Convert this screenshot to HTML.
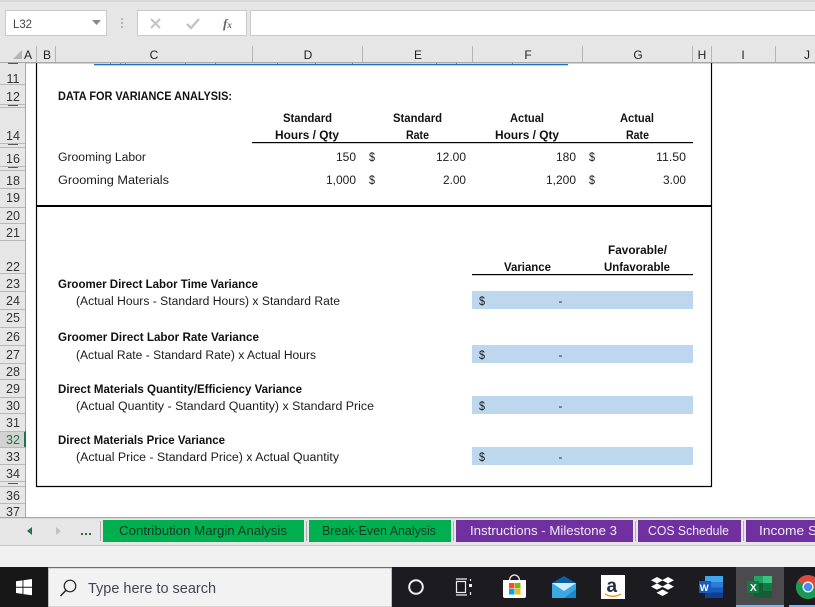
<!DOCTYPE html>
<html><head><meta charset="utf-8"><style>
html,body{margin:0;padding:0;width:815px;height:607px;overflow:hidden;background:#fff}
svg{display:block}
text{font-family:"Liberation Sans",sans-serif;font-size:11.5px;fill:#1c1c1c}
.b{font-weight:bold;fill:#111}
.h{font-size:12px;fill:#222;text-anchor:middle}
.r{font-size:12.5px;fill:#333;text-anchor:middle}
.t{font-size:12.5px}
</style></head><body>
<svg width="815" height="607" viewBox="0 0 815 607" xmlns="http://www.w3.org/2000/svg">
<rect width="815" height="607" fill="#fff"/>
<!-- ribbon / formula bar -->
<rect width="815" height="63" fill="#e6e6e6"/>
<rect x="0" y="0" width="815" height="2" fill="#d8d8d8"/>
<rect x="5.500" y="10.500" width="101" height="25" fill="#fff" stroke="#c9c9c9"/>
<text x="13" y="28" style="font-size:12px;fill:#444" textLength="19" lengthAdjust="spacingAndGlyphs">L32</text>
<path d="M92 20h9l-4.500 5z" fill="#888"/>
<g fill="#b5b5b5"><rect x="121" y="18" width="2" height="2"/><rect x="121" y="22" width="2" height="2"/><rect x="121" y="26" width="2" height="2"/></g>
<rect x="137.500" y="10.500" width="109" height="25" fill="#fff" stroke="#c9c9c9"/>
<path d="M151 19l9 9M160 19l-9 9" stroke="#c4c4c4" stroke-width="2" fill="none"/>
<path d="M187 24l4 4 8-9" stroke="#c4c4c4" stroke-width="2.400" fill="none"/>
<text x="223" y="28" style="font-family:'Liberation Serif',serif;font-style:italic;font-weight:bold;font-size:13px;fill:#666">f<tspan font-size="9">x</tspan></text>
<rect x="250.500" y="10.500" width="570" height="25" fill="#fff" stroke="#c9c9c9"/>
<!-- column header -->
<path d="M22 50v9h-9z" fill="#b5b5b5"/>
<rect x="0" y="62" width="815" height="1.500" fill="#a8a8a8"/>
<g fill="#b5b5b5">
<rect x="36" y="46" width="1" height="16"/><rect x="55" y="46" width="1" height="16"/><rect x="252" y="46" width="1" height="16"/>
<rect x="362" y="46" width="1" height="16"/><rect x="472" y="46" width="1" height="16"/><rect x="582" y="46" width="1" height="16"/>
<rect x="692" y="46" width="1" height="16"/><rect x="711" y="46" width="1" height="16"/><rect x="775" y="46" width="1" height="16"/>
</g>
<g>
<text class="h" x="28" y="59">A</text><text class="h" x="47" y="59">B</text><text class="h" x="154" y="59">C</text>
<text class="h" x="308" y="59">D</text><text class="h" x="418" y="59">E</text><text class="h" x="528" y="59">F</text>
<text class="h" x="638" y="59">G</text><text class="h" x="702" y="59">H</text><text class="h" x="743" y="59">I</text><text class="h" x="807" y="59">J</text>
</g>
<!-- row header -->
<rect x="0" y="63" width="25" height="454" fill="#e6e6e6"/>
<rect x="25" y="63" width="1" height="454" fill="#a8a8a8"/>
<rect x="0" y="431" width="25" height="16" fill="#d2d2d2"/>
<rect x="24" y="431" width="2" height="16" fill="#217346"/>
<path d="M0 84h25M0 104h25M0 107h25M0 143h25M0 147h25M0 166h25M0 170h25M0 188h25M0 207h25M0 223h25M0 240h25M0 273h25M0 291h25M0 309h25M0 327h25M0 345h25M0 363h25M0 379h25M0 397h25M0 413h25M0 431h25M0 447h25M0 464h25M0 481h25M0 486h25M0 503h25" stroke="#b8b8b8" stroke-width="1" transform="translate(0,.5)"/>
<g fill="#555"><rect x="8" y="105" width="10" height="1"/><rect x="8" y="144" width="10" height="1"/><rect x="8" y="167" width="10" height="1"/><rect x="8" y="483" width="10" height="1"/><rect x="8" y="63" width="10" height="1"/></g>
<g>
<text class="r" x="13" y="83">11</text><text class="r" x="13" y="101">12</text><text class="r" x="13" y="140">14</text>
<text class="r" x="13" y="163">16</text><text class="r" x="13" y="185">18</text><text class="r" x="13" y="202">19</text>
<text class="r" x="13" y="220">20</text><text class="r" x="13" y="237">21</text><text class="r" x="13" y="271">22</text>
<text class="r" x="13" y="288">23</text><text class="r" x="13" y="305">24</text><text class="r" x="13" y="322">25</text>
<text class="r" x="13" y="341">26</text><text class="r" x="13" y="359">27</text><text class="r" x="13" y="376">28</text>
<text class="r" x="13" y="393">29</text><text class="r" x="13" y="410">30</text><text class="r" x="13" y="427">31</text>
<text class="r" x="13" y="444" style="fill:#217346">32</text><text class="r" x="13" y="461">33</text><text class="r" x="13" y="478">34</text>
<text class="r" x="13" y="500">36</text><text class="r" x="13" y="516">37</text>
</g>
<!-- blue clipped line -->
<rect x="94" y="64" width="474" height="1.300" fill="#1f6fc0"/>
<g fill="#3c8fd8"><rect x="110" y="63" width="1" height="1"/><rect x="120" y="63" width="1" height="1"/><rect x="125" y="63" width="1" height="1"/><rect x="185" y="63" width="1" height="1"/><rect x="215" y="63" width="1" height="1"/><rect x="277" y="63" width="1" height="1"/><rect x="315" y="63" width="1" height="1"/><rect x="352" y="63" width="1" height="1"/><rect x="436" y="63" width="1" height="1"/><rect x="456" y="63" width="1" height="1"/><rect x="512" y="63" width="1" height="1"/></g>
<!-- sheet box -->
<path d="M36.500 63V486.500H711.500V63" fill="none" stroke="#000" stroke-width="1.200"/>
<rect x="37" y="205" width="674" height="2" fill="#000"/>
<!-- data -->
<text class="b" x="58" y="100" textLength="174" lengthAdjust="spacingAndGlyphs">DATA FOR VARIANCE ANALYSIS:</text>
<text class="b" x="283" y="122" textLength="49" lengthAdjust="spacingAndGlyphs">Standard</text>
<text class="b" x="393" y="122" textLength="49" lengthAdjust="spacingAndGlyphs">Standard</text>
<text class="b" x="510" y="122" textLength="34" lengthAdjust="spacingAndGlyphs">Actual</text>
<text class="b" x="620" y="122" textLength="34" lengthAdjust="spacingAndGlyphs">Actual</text>
<text class="b" x="275" y="139" textLength="64" lengthAdjust="spacingAndGlyphs">Hours / Qty</text>
<text class="b" x="406" y="139" textLength="23" lengthAdjust="spacingAndGlyphs">Rate</text>
<text class="b" x="495" y="139" textLength="64" lengthAdjust="spacingAndGlyphs">Hours / Qty</text>
<text class="b" x="626" y="139" textLength="23" lengthAdjust="spacingAndGlyphs">Rate</text>
<rect x="252" y="142" width="441" height="1.200" fill="#000"/>
<text x="58" y="161" textLength="88" lengthAdjust="spacingAndGlyphs">Grooming Labor</text>
<text x="58" y="184" textLength="111" lengthAdjust="spacingAndGlyphs">Grooming Materials</text>
<text x="336" y="161" textLength="20" lengthAdjust="spacingAndGlyphs">150</text>
<text x="369" y="161" textLength="6" lengthAdjust="spacingAndGlyphs">$</text>
<text x="436" y="161" textLength="30" lengthAdjust="spacingAndGlyphs">12.00</text>
<text x="556" y="161" textLength="20" lengthAdjust="spacingAndGlyphs">180</text>
<text x="589" y="161" textLength="6" lengthAdjust="spacingAndGlyphs">$</text>
<text x="656" y="161" textLength="30" lengthAdjust="spacingAndGlyphs">11.50</text>
<text x="326" y="184" textLength="30" lengthAdjust="spacingAndGlyphs">1,000</text>
<text x="369" y="184" textLength="6" lengthAdjust="spacingAndGlyphs">$</text>
<text x="443" y="184" textLength="23" lengthAdjust="spacingAndGlyphs">2.00</text>
<text x="546" y="184" textLength="30" lengthAdjust="spacingAndGlyphs">1,200</text>
<text x="589" y="184" textLength="6" lengthAdjust="spacingAndGlyphs">$</text>
<text x="663" y="184" textLength="23" lengthAdjust="spacingAndGlyphs">3.00</text>
<!-- variance -->
<text class="b" x="608" y="254" textLength="59" lengthAdjust="spacingAndGlyphs">Favorable/</text>
<text class="b" x="504" y="271" textLength="47" lengthAdjust="spacingAndGlyphs">Variance</text>
<text class="b" x="604" y="271" textLength="66" lengthAdjust="spacingAndGlyphs">Unfavorable</text>
<rect x="472" y="274" width="221" height="1.200" fill="#000"/>
<g fill="#bdd7ee"><rect x="472" y="291" width="221" height="18"/><rect x="472" y="345" width="221" height="18"/><rect x="472" y="396" width="221" height="18"/><rect x="472" y="447" width="221" height="18"/></g>
<g>
<text x="479" y="305" textLength="6" lengthAdjust="spacingAndGlyphs">$</text><text x="558.500" y="305">-</text>
<text x="479" y="359" textLength="6" lengthAdjust="spacingAndGlyphs">$</text><text x="558.500" y="359">-</text>
<text x="479" y="410" textLength="6" lengthAdjust="spacingAndGlyphs">$</text><text x="558.500" y="410">-</text>
<text x="479" y="461" textLength="6" lengthAdjust="spacingAndGlyphs">$</text><text x="558.500" y="461">-</text>
</g>
<text class="b" x="58" y="288" textLength="200" lengthAdjust="spacingAndGlyphs">Groomer Direct Labor Time Variance</text>
<text x="76" y="305" textLength="264" lengthAdjust="spacingAndGlyphs">(Actual Hours - Standard Hours) x Standard Rate</text>
<text class="b" x="58" y="341" textLength="201" lengthAdjust="spacingAndGlyphs">Groomer Direct Labor Rate Variance</text>
<text x="76" y="359" textLength="240" lengthAdjust="spacingAndGlyphs">(Actual Rate - Standard Rate) x Actual Hours</text>
<text class="b" x="58" y="393" textLength="244" lengthAdjust="spacingAndGlyphs">Direct Materials Quantity/Efficiency Variance</text>
<text x="76" y="410" textLength="298" lengthAdjust="spacingAndGlyphs">(Actual Quantity - Standard Quantity) x Standard Price</text>
<text class="b" x="58" y="444" textLength="167" lengthAdjust="spacingAndGlyphs">Direct Materials Price Variance</text>
<text x="76" y="461" textLength="263" lengthAdjust="spacingAndGlyphs">(Actual Price - Standard Price) x Actual Quantity</text>
<!-- tabs -->
<rect x="0" y="517" width="815" height="29" fill="#e6e6e6"/>
<rect x="0" y="517" width="815" height="1.200" fill="#a8a8a8"/>
<rect x="0" y="545" width="815" height="1" fill="#c6c6c6"/>
<rect x="0" y="546" width="815" height="21" fill="#f0f0f0"/>
<path d="M32 527v8l-5-4z" fill="#217346"/>
<path d="M56 527v8l5-4z" fill="#c2c2c2"/>
<g fill="#217346"><rect x="81" y="533" width="2" height="2"/><rect x="85" y="533" width="2" height="2"/><rect x="89" y="533" width="2" height="2"/></g>
<g fill="#b0b0b0"><rect x="100" y="521" width="1" height="20"/><rect x="306" y="521" width="1" height="20"/><rect x="453" y="521" width="1" height="20"/><rect x="635" y="521" width="1" height="20"/><rect x="743" y="521" width="1" height="20"/></g>
<rect x="103" y="520" width="201" height="22" fill="#00b050"/>
<rect x="309" y="520" width="142" height="22" fill="#00b050"/>
<rect x="456" y="520" width="177" height="22" fill="#7030a0"/>
<rect x="638" y="520" width="103" height="22" fill="#7030a0"/>
<rect x="746" y="520" width="69" height="22" fill="#7030a0"/>
<text class="t" x="119" y="535" textLength="168" lengthAdjust="spacingAndGlyphs" style="fill:#103a20">Contribution Margin Analysis</text>
<text class="t" x="322" y="535" textLength="114" lengthAdjust="spacingAndGlyphs" style="fill:#103a20;font-size:13px">Break-Even Analysis</text>
<text class="t" x="470" y="535" textLength="147" lengthAdjust="spacingAndGlyphs" style="fill:#f0e8f6">Instructions - Milestone 3</text>
<text class="t" x="648" y="535" textLength="81" lengthAdjust="spacingAndGlyphs" style="fill:#f0e8f6;font-size:13px">COS Schedule</text>
<text class="t" x="759" y="535" textLength="62" lengthAdjust="spacingAndGlyphs" style="fill:#f0e8f6">Income St</text>
<!-- taskbar -->
<rect x="0" y="567" width="815" height="40" fill="#1b1b20"/>
<rect x="0" y="567" width="48" height="40" fill="#171717"/>
<path d="M16 581.300l6.500-.9v6.300H16zM23.400 580.300l8.600-1.300v7.700h-8.600zM16 587.700h6.500v6.200l-6.500-.9zM23.400 587.700H32v7.600l-8.600-1.200z" fill="#fff"/>
<rect x="48.500" y="568" width="343" height="39" fill="#f2f2f2" stroke="#bdbdbd"/>
<circle cx="70" cy="586" r="5.800" fill="none" stroke="#222" stroke-width="1.200"/>
<path d="M65.800 590.500L60.500 596" stroke="#222" stroke-width="1.400"/>
<text x="88" y="593" style="font-size:15px;fill:#40464f" textLength="128" lengthAdjust="spacingAndGlyphs">Type here to search</text>
<circle cx="416" cy="587" r="6.800" fill="none" stroke="#eee" stroke-width="2"/>
<g fill="none" stroke="#eee" stroke-width="1.200"><rect x="456.500" y="581.500" width="9" height="11"/><path d="M456 579h11M456 595h11M470.500 579v2M470.500 592v3"/></g>
<rect x="469" y="584" width="3" height="3" fill="#eee"/>
<path d="M503 580h23v16a2 2 0 0 1-2 2h-19a2 2 0 0 1-2-2z" fill="#fff"/>
<path d="M509.500 581c0-8 10-8 10 0" fill="none" stroke="#eee" stroke-width="1.300"/>
<rect x="509" y="583" width="5.500" height="5.500" fill="#f25022"/><rect x="515" y="583" width="5.500" height="5.500" fill="#7fba00"/><rect x="509" y="589" width="5.500" height="5.500" fill="#00a4ef"/><rect x="515" y="589" width="5.500" height="5.500" fill="#ffb900"/>
<path d="M552 583l12-7 12 7v15h-24z" fill="#0a5fa8"/>
<path d="M552 583h24v15h-24z" fill="#38a9e2"/>
<path d="M552 583l12 8 12-8" fill="#d6eefa"/>
<path d="M576 598h-12l12-9z" fill="#1e86cc"/>
<rect x="601" y="575" width="24" height="24" fill="#fff"/>
<text x="606.500" y="592" style="font-size:19px;font-weight:bold;fill:#222f3e">a</text>
<path d="M605 594c5 3 11 3 16 0" fill="none" stroke="#f79a1f" stroke-width="1.500"/>
<path d="M657 577l6 3.200-6 3.200-6-3.200zM668 577l6 3.200-6 3.200-6-3.200zM657 583.400l6 3.200-6 3.200-6-3.200zM668 583.400l6 3.200-6 3.200-6-3.200zM662.500 589.500l6 3.200-6 3.300-6-3.300z" fill="#fff"/>
<rect x="705" y="576" width="18" height="22" fill="#185abd"/>
<rect x="705" y="576" width="18" height="6" fill="#41a5ee"/><rect x="705" y="582" width="18" height="5.500" fill="#2b7cd3"/><rect x="705" y="592.500" width="18" height="5.500" fill="#103f91"/>
<rect x="699" y="581" width="12" height="12" fill="#185abd"/>
<text x="699.800" y="591" style="font-size:9.500px;font-weight:bold;fill:#fff">W</text>
<rect x="736" y="567" width="48" height="38" fill="#4b4b4d"/>
<rect x="736" y="605" width="48" height="2" fill="#76b9ed"/>
<rect x="754" y="576" width="18" height="22" fill="#185c37"/>
<rect x="754" y="576" width="18" height="7" fill="#21a366"/><rect x="763" y="576" width="9" height="7" fill="#33c481"/><rect x="763" y="583" width="9" height="8" fill="#107c41"/>
<rect x="747" y="581" width="12" height="12" fill="#107c41"/>
<text x="750" y="591" style="font-size:10px;font-weight:bold;fill:#fff">X</text>
<rect x="789" y="605" width="26" height="2" fill="#76b9ed"/>
<circle cx="808" cy="587" r="12" fill="#dd4b3e"/>
<path d="M808 587l-10.400-6a12 12 0 0 0 4.400 16.400l6-10.400z" fill="#169c53"/>
<path d="M808 587l6 10.400A12 12 0 0 0 820 587z" fill="#fbc116"/>
<path d="M802 597.400L808 587h12a12 12 0 0 1-18 10.400z" fill="#169c53"/>
<circle cx="808" cy="587" r="5.500" fill="#fff"/><circle cx="808" cy="587" r="4.300" fill="#4a8af4"/>
</svg>
</body></html>
